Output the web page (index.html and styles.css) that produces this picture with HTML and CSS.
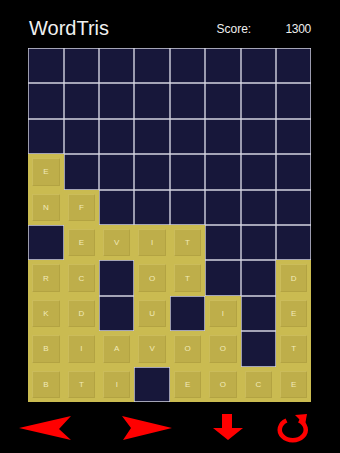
FILE: index.html
```html
<!DOCTYPE html>
<html>
<head>
<meta charset="utf-8">
<link rel="stylesheet" href="styles.css">
</head>
<body>
<div class="app">
  <header class="top">
    <h1 class="title">WordTris</h1>
    <div class="score"><span class="score-label">Score:</span><span class="score-value">1300</span></div>
  </header>
  <div class="board">
    <div class="c"></div><div class="c"></div><div class="c"></div><div class="c"></div><div class="c"></div><div class="c"></div><div class="c"></div><div class="c"></div>
    <div class="c"></div><div class="c"></div><div class="c"></div><div class="c"></div><div class="c"></div><div class="c"></div><div class="c"></div><div class="c"></div>
    <div class="c"></div><div class="c"></div><div class="c"></div><div class="c"></div><div class="c"></div><div class="c"></div><div class="c"></div><div class="c"></div>
    <div class="t"><span>E</span></div><div class="c"></div><div class="c"></div><div class="c"></div><div class="c"></div><div class="c"></div><div class="c"></div><div class="c"></div>
    <div class="t"><span>N</span></div><div class="t"><span>F</span></div><div class="c"></div><div class="c"></div><div class="c"></div><div class="c"></div><div class="c"></div><div class="c"></div>
    <div class="c"></div><div class="t"><span>E</span></div><div class="t"><span>V</span></div><div class="t"><span>I</span></div><div class="t"><span>T</span></div><div class="c"></div><div class="c"></div><div class="c"></div>
    <div class="t"><span>R</span></div><div class="t"><span>C</span></div><div class="c"></div><div class="t"><span>O</span></div><div class="t"><span>T</span></div><div class="c"></div><div class="c"></div><div class="t"><span>D</span></div>
    <div class="t"><span>K</span></div><div class="t"><span>D</span></div><div class="c"></div><div class="t"><span>U</span></div><div class="c"></div><div class="t"><span>I</span></div><div class="c"></div><div class="t"><span>E</span></div>
    <div class="t"><span>B</span></div><div class="t"><span>I</span></div><div class="t"><span>A</span></div><div class="t"><span>V</span></div><div class="t"><span>O</span></div><div class="t"><span>O</span></div><div class="c"></div><div class="t"><span>T</span></div>
    <div class="t"><span>B</span></div><div class="t"><span>T</span></div><div class="t"><span>I</span></div><div class="c"></div><div class="t"><span>E</span></div><div class="t"><span>O</span></div><div class="t"><span>C</span></div><div class="t"><span>E</span></div>
  </div>
  <nav class="controls">
    <button class="btn btn-left" aria-label="Left">
      <svg width="62" height="36" viewBox="0 0 62 36"><polygon points="5,18 57,6 45,19 57,30" fill="#ff0000"/></svg>
    </button>
    <button class="btn btn-right" aria-label="Right">
      <svg width="60" height="36" viewBox="0 0 60 36"><polygon points="5,6 55,18 6,30 14,18" fill="#ff0000"/></svg>
    </button>
    <button class="btn btn-down" aria-label="Drop">
      <svg width="40" height="36" viewBox="0 0 40 36"><polygon points="14,4 24,4 24,18 35,18 20,30 5,18 14,18" fill="#ff0000"/></svg>
    </button>
    <button class="btn btn-rotate" aria-label="Rotate">
      <svg width="34" height="36" viewBox="0 0 34 36">
        <path d="M10.5 10.5 A13 10.5 0 1 0 23 10.5" fill="none" stroke="#ff0000" stroke-width="4.5"/>
        <polygon points="19,5 31,4 29,15" fill="#ff0000"/>
      </svg>
    </button>
  </nav>
</div>
</body>
</html>
```
FILE: styles.css
```css
html, body {
  margin: 0;
  padding: 0;
  background: #000;
}
.app {
  width: 340px;
  height: 453px;
  background: #000;
  font-family: "Liberation Sans", Arial, sans-serif;
  color: #f2f2f2;
  overflow: hidden;
}
.top {
  display: flex;
  align-items: flex-end;
  height: 38px;
  padding: 0 29px 0 29px;
  margin-bottom: 10px;
}
.title {
  margin: 0;
  font-size: 20px;
  font-weight: normal;
  line-height: 20px;
  flex: 1;
  color: #f0f0f0;
}
.score {
  display: flex;
  font-size: 12px;
  line-height: 12px;
  padding-bottom: 3px;
  color: #eeeeee;
}
.score-label {
  width: 69px;
}
.score-value {
  letter-spacing: -0.3px;
}
.board {
  margin-left: 28.3px;
  width: 283.2px;
  display: grid;
  grid-template-columns: repeat(8, 35.4px);
  grid-template-rows: repeat(10, 35.4px);
}
.c {
  background: #17173a;
  box-shadow: inset 0 0 0 0.7px #d4d4e0;
}
.t {
  background: #cabb51;
  padding: 4px;
  display: flex;
}
.t span {
  flex: 1;
  display: flex;
  align-items: center;
  justify-content: center;
  background: #beae4a;
  box-shadow: inset 1px 1px 0 rgba(255, 245, 160, 0.2), inset -1px -1px 0 rgba(120, 100, 20, 0.15);
  font-size: 8px;
  color: #f1eab9;
}
.controls {
  display: flex;
  align-items: center;
  padding-left: 14px;
  margin-top: 8px;
  height: 36px;
}
.btn {
  border: 0;
  padding: 0;
  margin: 0;
  background: transparent;
  display: block;
  height: 36px;
}
.btn svg {
  display: block;
}
.btn-left { width: 62px; }
.btn-right { width: 60px; margin-left: 41px; }
.btn-down { width: 40px; margin-left: 31px; }
.btn-rotate { width: 34px; margin-left: 28px; }
```
